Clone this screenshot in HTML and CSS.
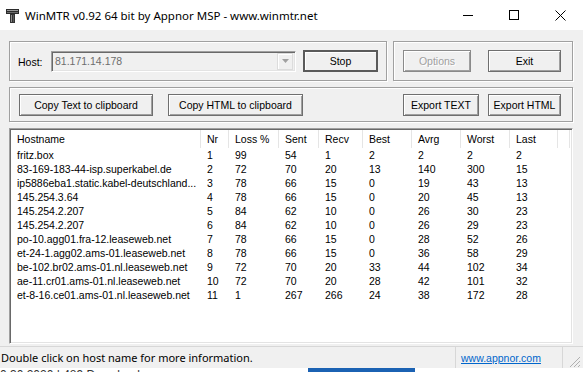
FILE: index.html
```html
<!DOCTYPE html>
<html>
<head>
	<meta charset="UTF-8">
	<title>WinMTR</title>
	<link rel="stylesheet" href="styles.css">
</head>
<body>

	<div class="window">
		<!-- title bar -->
		<div class="titlebar">
			<svg class="app-icon" width="16" height="16" viewBox="0 0 16 16">
				<rect x="1" y="1" width="13" height="5" fill="#2b2b2b"/>
				<rect x="2" y="2" width="11" height="1" fill="#9a9a9a"/>
				<rect x="2" y="4" width="11" height="1" fill="#6a6a6a"/>
				<rect x="5" y="6" width="5" height="9" fill="#333"/>
				<rect x="6" y="7" width="1" height="7" fill="#8c8c8c"/>
				<rect x="8" y="7" width="1" height="7" fill="#5a5a5a"/>
			</svg>
			<span class="title">WinMTR v0.92 64 bit by Appnor MSP - www.winmtr.net</span>
			<div class="controls">
				<span class="ctl"><svg width="10" height="10" viewBox="0 0 10 10"><path d="M0 5.5h10" stroke="#000" stroke-width="1"/></svg></span>
				<span class="ctl"><svg width="10" height="10" viewBox="0 0 10 10"><rect x="0.5" y="0.5" width="9" height="9" fill="none" stroke="#000"/></svg></span>
				<span class="ctl"><svg width="11" height="11" viewBox="0 0 11 11"><path d="M0.5 0.5l10 10M10.5 0.5l-10 10" stroke="#000" stroke-width="1"/></svg></span>
			</div>
		</div>

		<div class="client">
			<div class="row">
				<div class="group group-host">
					<label class="host-label">Host:</label>
					<div class="combo">
						<span class="combo-text">81.171.14.178</span>
						<span class="combo-arrow"><svg width="7" height="4" viewBox="0 0 7 4"><path d="M0 0h7L3.5 4z" fill="#a0a0a0"/></svg></span>
					</div>
					<button class="btn btn-default btn-stop">Stop</button>
				</div>
				<div class="group group-opts">
					<button class="btn btn-options" disabled>Options</button>
					<button class="btn btn-exit">Exit</button>
				</div>
			</div>

			<div class="group group-copy">
				<button class="btn btn-copy-text">Copy Text to clipboard</button>
				<button class="btn btn-copy-html">Copy HTML to clipboard</button>
				<span class="spacer"></span>
				<button class="btn btn-export-text">Export TEXT</button>
				<button class="btn btn-export-html">Export HTML</button>
			</div>

			<div class="list">
				<div class="list-head">
					<span>Hostname</span><span>Nr</span><span>Loss %</span><span>Sent</span><span>Recv</span><span>Best</span><span>Avrg</span><span>Worst</span><span>Last</span><span></span>
				</div>
				<div class="list-body">
					<div class="list-row"><span>fritz.box</span><span>1</span><span>99</span><span>54</span><span>1</span><span>2</span><span>2</span><span>2</span><span>2</span></div>
					<div class="list-row"><span>83-169-183-44-isp.superkabel.de</span><span>2</span><span>72</span><span>70</span><span>20</span><span>13</span><span>140</span><span>300</span><span>15</span></div>
					<div class="list-row"><span>ip5886eba1.static.kabel-deutschland...</span><span>3</span><span>78</span><span>66</span><span>15</span><span>0</span><span>19</span><span>43</span><span>13</span></div>
					<div class="list-row"><span>145.254.3.64</span><span>4</span><span>78</span><span>66</span><span>15</span><span>0</span><span>20</span><span>45</span><span>13</span></div>
					<div class="list-row"><span>145.254.2.207</span><span>5</span><span>84</span><span>62</span><span>10</span><span>0</span><span>26</span><span>30</span><span>23</span></div>
					<div class="list-row"><span>145.254.2.207</span><span>6</span><span>84</span><span>62</span><span>10</span><span>0</span><span>26</span><span>29</span><span>23</span></div>
					<div class="list-row"><span>po-10.agg01.fra-12.leaseweb.net</span><span>7</span><span>78</span><span>66</span><span>15</span><span>0</span><span>28</span><span>52</span><span>26</span></div>
					<div class="list-row"><span>et-24-1.agg02.ams-01.leaseweb.net</span><span>8</span><span>78</span><span>66</span><span>15</span><span>0</span><span>36</span><span>58</span><span>29</span></div>
					<div class="list-row"><span>be-102.br02.ams-01.nl.leaseweb.net</span><span>9</span><span>72</span><span>70</span><span>20</span><span>33</span><span>44</span><span>102</span><span>34</span></div>
					<div class="list-row"><span>ae-11.cr01.ams-01.nl.leaseweb.net</span><span>10</span><span>72</span><span>70</span><span>20</span><span>28</span><span>42</span><span>101</span><span>32</span></div>
					<div class="list-row"><span>et-8-16.ce01.ams-01.nl.leaseweb.net</span><span>11</span><span>1</span><span>267</span><span>266</span><span>24</span><span>38</span><span>172</span><span>28</span></div>
				</div>
			</div>
		</div>

		<!-- status bar -->
		<div class="statusbar">
			<span class="status-text">Double click on host name for more information.</span>
			<span class="status-link"><a href="#">www.appnor.com</a></span>
			<svg class="grip" width="14" height="14" viewBox="0 0 14 14">
				<path d="M13 3L3 13M13 7L7 13M13 11L11 13" stroke="#b0b0b0" stroke-width="1"/>
			</svg>
		</div>
	</div>

	<div class="below">
		<span class="below-text">0.30.2020 | 489 Downloads</span>
		<span class="below-btn"></span>
	</div>

</body>
</html>
```

FILE: styles.css
```css
* { margin: 0; padding: 0; box-sizing: border-box; }

html, body {
	width: 100%;
	height: 100%;
	background: #fff;
	overflow: hidden;
}

.window {
	height: 368px;
	background: #f0f0f0;
	display: flex;
	flex-direction: column;
	font-family: "Liberation Sans", Arial, sans-serif;
	font-size: 10.5px;
	color: #000;
}

/* title bar */
.titlebar {
	height: 30px;
	background: #fff;
	display: flex;
	align-items: center;
	padding-left: 5px;
}
.app-icon {
	flex: none;
	margin-top: 1px;
}
.title {
	margin-left: 4px;
	font-family: "Noto Sans", "Open Sans", sans-serif;
	font-size: 11.5px;
	color: #000;
}
.controls {
	margin-left: auto;
	display: flex;
	height: 100%;
}
.ctl {
	width: 46px;
	display: flex;
	align-items: center;
	justify-content: center;
}

/* client area */
.client {
	flex: 1;
	display: flex;
	flex-direction: column;
	padding: 11px 10px 2px 9px;
	gap: 6px;
}
.row {
	display: flex;
	gap: 6px;
}
.group {
	border: 1px solid #a0a0a0;
	box-shadow: inset 1px 1px 0 #fff, 1px 1px 0 #fff;
	display: flex;
	align-items: center;
}
.group-host {
	width: 378px;
	height: 40px;
	padding-left: 8px;
}
.group-opts {
	flex: 1;
	height: 40px;
	padding-left: 9px;
	gap: 17px;
}
.group-copy {
	height: 35px;
	padding-left: 9px;
}
.spacer { flex: 1; }

.host-label {
	width: 33px;
	margin-top: 1px;
}
.combo {
	width: 245px;
	height: 21px;
	border: 1px solid #a0a0a0;
	border-right-color: #fff;
	border-bottom-color: #fff;
	box-shadow: inset 1px 1px 0 #696969, inset -1px -1px 0 #e3e3e3;
	background: #f0f0f0;
	display: flex;
	align-items: center;
	padding: 0 2px 0 3px;
}
.combo-text {
	flex: 1;
	color: #6d6d6d;
}
.combo-arrow {
	width: 16px;
	height: 17px;
	border: 1px solid #dcdcdc;
	box-shadow: inset 1px 1px 0 #fff;
	display: flex;
	align-items: center;
	justify-content: center;
}

.btn {
	height: 22px;
	font: inherit;
	color: #000;
	background: #f0f0f0;
	border: 1px solid #6f6f6f;
	box-shadow: inset 1px 1px 0 #fff, inset -1px -1px 0 #a0a0a0;
}
.btn-default {
	border: 2px solid #5a5a5a;
	box-shadow: inset 1px 1px 0 #fff;
}
.btn-stop { width: 75px; margin-left: 7px; }
.btn-options {
	width: 68px;
	color: #a0a0a0;
	text-shadow: 1px 1px 0 #fff;
	border-color: #8a8a8a;
}
.btn-exit { width: 73px; }
.btn-copy-text { width: 134px; }
.btn-copy-html { width: 135px; margin-left: 15px; }
.btn-export-text { width: 76px; }
.btn-export-html { width: 73px; margin-left: 9px; margin-right: 11px; }

/* list view */
.list {
	flex: 1;
	background: #fff;
	border: 1px solid #a0a0a0;
	border-right-color: #fff;
	border-bottom-color: #fff;
	box-shadow: inset 1px 1px 0 #696969, inset -1px -1px 0 #e3e3e3;
	padding: 1px 2px 0 1px;
	display: flex;
	flex-direction: column;
}
.list-head, .list-row {
	display: grid;
	grid-template-columns: 190px 28px 50px 40px 44px 49px 49px 49px 48px 1fr;
}
.list-head {
	height: 18px;
	align-items: stretch;
}
.list-head span {
	border-right: 1px solid #e5e5e5;
	padding-left: 6px;
	line-height: 18px;
}
.list-row {
	height: 14px;
	line-height: 14px;
}
.list-row span {
	padding-left: 6px;
	white-space: nowrap;
}

/* status bar */
.statusbar {
	height: 22px;
	border-top: 1px solid #d7d7d7;
	display: flex;
	align-items: center;
	font-family: "Noto Sans", "Open Sans", sans-serif;
	font-size: 11px;
}
.status-text {
	width: 455px;
	padding-left: 1px;
}
.status-link {
	width: 108px;
	height: 100%;
	border-left: 1px solid #d7d7d7;
	border-right: 1px solid #d7d7d7;
	display: flex;
	align-items: center;
	padding-left: 5px;
	font-family: "Liberation Sans", Arial, sans-serif;
	font-size: 10.5px;
}
.status-link a {
	color: #0066cc;
}
.grip {
	margin-left: auto;
	margin-top: 6px;
	margin-right: 2px;
}

/* page behind the window */
.below {
	height: 4px;
	overflow: hidden;
	display: flex;
	align-items: flex-start;
	font-family: "Liberation Sans", Arial, sans-serif;
	font-size: 12px;
	line-height: 12px;
	color: #333;
}
.below-text {
	width: 308px;
	padding-top: 1px;
}
.below-btn {
	width: 107px;
	height: 4px;
	background: #1b62b3;
}
```
